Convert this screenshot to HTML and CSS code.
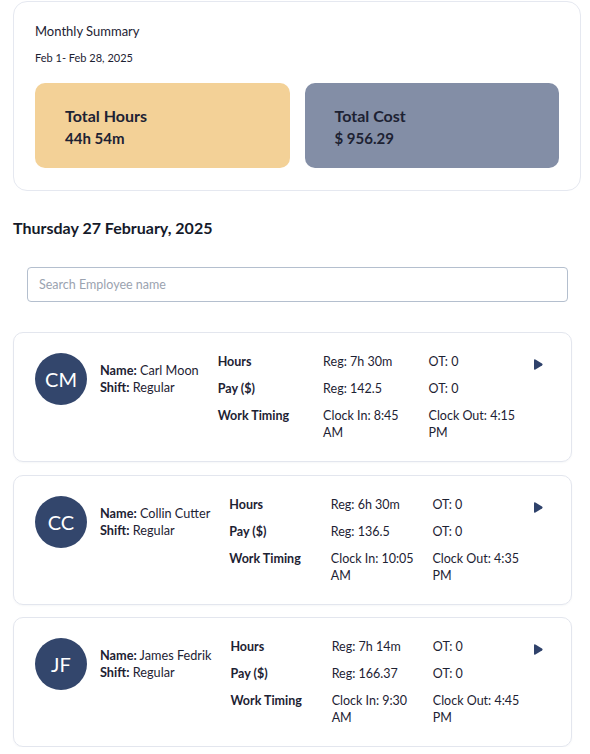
FILE: index.html
```html
<!DOCTYPE html>
<html lang="en">
<head>
<meta charset="utf-8">
<title>Monthly Summary</title>
<link rel="stylesheet" href="styles.css">
</head>
<body>
<main class="page">
  <section class="summary">
    <h2 class="summary-title">Monthly Summary</h2>
    <p class="summary-range">Feb 1- Feb 28, 2025</p>
    <div class="tiles">
      <div class="tile tile-hours">
        <div class="tile-label">Total Hours</div>
        <div class="tile-value">44h 54m</div>
      </div>
      <div class="tile tile-cost">
        <div class="tile-label">Total Cost</div>
        <div class="tile-value">$ 956.29</div>
      </div>
    </div>
  </section>

  <h1 class="day-heading">Thursday 27 February, 2025</h1>

  <div class="search-wrap">
    <input class="search" type="text" placeholder="Search Employee name">
  </div>

  <div class="list">
    <article class="emp-card">
      <div class="emp-info">
        <div class="avatar">CM</div>
        <div class="emp-meta">
          <div><b>Name:</b> Carl Moon</div>
          <div><b>Shift:</b> Regular</div>
        </div>
      </div>
      <div class="emp-grid">
        <div class="lbl">Hours</div><div>Reg: 7h 30m</div><div>OT: 0</div>
        <div class="arrow"><svg width="9" height="11" viewBox="0 0 9 11"><path d="M1.4 0.5 L8 4.4 Q9.2 5.5 8 6.6 L1.4 10.5 Q0 11.2 0 9.7 V1.3 Q0 -0.2 1.4 0.5Z" fill="#2f426b"/></svg></div>
        <div class="lbl">Pay ($)</div><div>Reg: 142.5</div><div>OT: 0</div><div></div>
        <div class="lbl">Work Timing</div><div>Clock In: 8:45 AM</div><div>Clock Out: 4:15 PM</div><div></div>
      </div>
    </article>

    <article class="emp-card">
      <div class="emp-info">
        <div class="avatar">CC</div>
        <div class="emp-meta">
          <div><b>Name:</b> Collin Cutter</div>
          <div><b>Shift:</b> Regular</div>
        </div>
      </div>
      <div class="emp-grid">
        <div class="lbl">Hours</div><div>Reg: 6h 30m</div><div>OT: 0</div>
        <div class="arrow"><svg width="9" height="11" viewBox="0 0 9 11"><path d="M1.4 0.5 L8 4.4 Q9.2 5.5 8 6.6 L1.4 10.5 Q0 11.2 0 9.7 V1.3 Q0 -0.2 1.4 0.5Z" fill="#2f426b"/></svg></div>
        <div class="lbl">Pay ($)</div><div>Reg: 136.5</div><div>OT: 0</div><div></div>
        <div class="lbl">Work Timing</div><div>Clock In: 10:05 AM</div><div>Clock Out: 4:35 PM</div><div></div>
      </div>
    </article>

    <article class="emp-card">
      <div class="emp-info">
        <div class="avatar">JF</div>
        <div class="emp-meta">
          <div><b>Name:</b> James Fedrik</div>
          <div><b>Shift:</b> Regular</div>
        </div>
      </div>
      <div class="emp-grid">
        <div class="lbl">Hours</div><div>Reg: 7h 14m</div><div>OT: 0</div>
        <div class="arrow"><svg width="9" height="11" viewBox="0 0 9 11"><path d="M1.4 0.5 L8 4.4 Q9.2 5.5 8 6.6 L1.4 10.5 Q0 11.2 0 9.7 V1.3 Q0 -0.2 1.4 0.5Z" fill="#2f426b"/></svg></div>
        <div class="lbl">Pay ($)</div><div>Reg: 166.37</div><div>OT: 0</div><div></div>
        <div class="lbl">Work Timing</div><div>Clock In: 9:30 AM</div><div>Clock Out: 4:45 PM</div><div></div>
      </div>
    </article>
  </div>
</main>
</body>
</html>
```

FILE: styles.css
```css
* { box-sizing: border-box; }

html, body {
  margin: 0;
  padding: 0;
  background: #ffffff;
}

body {
  font-family: Lato, "Noto Sans", "Liberation Sans", sans-serif;
  color: #1d2233;
}

.page {
  width: 568px;
  margin-left: 13px;
  padding-top: 1px;
}

.summary {
  border: 1px solid #e5e8f0;
  border-radius: 14px;
  padding: 21px 21px 22px 21px;
}

.summary-title {
  margin: 0;
  font-size: 13px;
  font-weight: 400;
  line-height: 16px;
}

.summary-range {
  margin: 12px 0 0;
  font-size: 11px;
  line-height: 14px;
}

.tiles {
  display: grid;
  grid-template-columns: 1fr 1fr;
  gap: 15px;
  margin-top: 18px;
}

.tile {
  border-radius: 10px;
  padding: 22px 30px 20px;
  height: 85px;
}

.tile-hours { background: #f3d197; }
.tile-cost { background: #838ea6; }

.tile-label {
  font-size: 16px;
  font-weight: 700;
  line-height: 22px;
}

.tile-value {
  font-size: 15px;
  font-weight: 700;
  line-height: 22px;
}

.day-heading {
  margin: 27px 0 0;
  font-size: 16px;
  font-weight: 700;
  line-height: 19px;
  color: #151a2a;
}

.search-wrap {
  padding: 30px 13px 0 14px;
}

.search {
  display: block;
  width: 541px;
  height: 35px;
  border: 1px solid #b4bfce;
  border-radius: 4px;
  padding: 0 11px;
  font-family: inherit;
  font-size: 12.5px;
  color: #1d2233;
  outline: none;
}

.search::placeholder { color: #9ba3b0; }

.list {
  width: 559px;
  padding-top: 30px;
  display: flex;
  flex-direction: column;
  gap: 12.5px;
}

.emp-card {
  display: flex;
  align-items: flex-start;
  gap: 19px;
  border: 1px solid #e3e6ee;
  border-radius: 10px;
  padding: 20px 21px 20px 21px;
  box-shadow: 0 1px 2px rgba(30, 40, 70, 0.04);
  height: 130px;
}

.emp-info {
  display: flex;
  align-items: center;
  gap: 13px;
  flex: none;
}

.avatar {
  width: 52px;
  height: 52px;
  border-radius: 50%;
  background: #33466c;
  color: #ffffff;
  font-size: 20px;
  display: flex;
  align-items: center;
  justify-content: center;
}

.emp-meta {
  font-size: 12.7px;
  line-height: 17px;
}

.emp-meta b { font-weight: 700; }

.emp-grid {
  flex: 1;
  display: grid;
  grid-template-columns: minmax(0, 1fr) minmax(0, 1fr) minmax(0, 1fr) 16px;
  row-gap: 10px;
  font-size: 12.5px;
  line-height: 17px;
}

.emp-grid > div { padding-right: 8px; }
.emp-grid > .arrow { padding-right: 0; }

.lbl { font-weight: 700; }

.arrow {
  padding-top: 6px;
  line-height: 0;
}
```
